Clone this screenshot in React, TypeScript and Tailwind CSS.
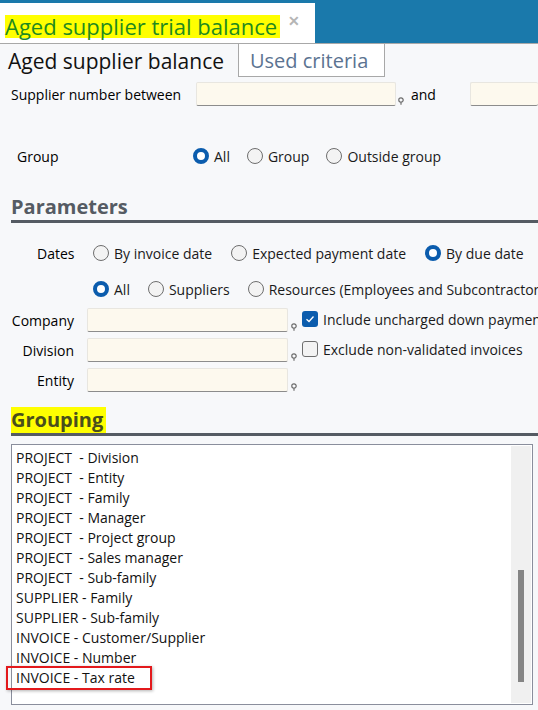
import React from 'react';

const font = "font-['Open_Sans',sans-serif]";

function Pin() {
  return (
    <svg width="6" height="8" viewBox="0 0 6 8" className="shrink-0">
      <circle cx="3" cy="3" r="2.2" fill="none" stroke="#6b6b6b" strokeWidth="1.2" />
      <path d="M3 5.2 L3 7.8" stroke="#6b6b6b" strokeWidth="1.2" />
    </svg>
  );
}

function Field({ className }: { className: string }) {
  return (
    <div
      className={`h-[24px] shrink-0 bg-[#fdf9ee] border border-[#e8e6e0] border-b-[#8c8c8c] rounded-[2px] ${className}`}
    />
  );
}

function Radio({ checked, label }: { checked?: boolean; label: string }) {
  return (
    <div className="flex items-center gap-[5px] shrink-0">
      {checked ? (
        <span className="w-[16px] h-[16px] rounded-full border-[4.5px] border-[#0b5cad] bg-white" />
      ) : (
        <span className="w-[16px] h-[16px] rounded-full border border-[#6e6e6e] bg-[#f3f3f3]" />
      )}
      <span className="text-[14px] text-[#1a1a1a] whitespace-nowrap">{label}</span>
    </div>
  );
}

function Check({ checked, label }: { checked?: boolean; label: string }) {
  return (
    <div className="flex items-center gap-[5px] whitespace-nowrap">
      {checked ? (
        <span className="w-[16px] h-[16px] shrink-0 rounded-[3px] bg-[#0b5cad] flex items-center justify-center">
          <svg width="10" height="8" viewBox="0 0 10 8">
            <path d="M1.5 4.2 L4 6.5 L8.5 1.5" fill="none" stroke="white" strokeWidth="1.3" />
          </svg>
        </span>
      ) : (
        <span className="w-[16px] h-[16px] shrink-0 rounded-[3px] border border-[#6e6e6e] bg-[#f3f3f3]" />
      )}
      <span className="text-[14px] text-[#1a1a1a]">{label}</span>
    </div>
  );
}

const items = [
  'PROJECT  - Division',
  'PROJECT  - Entity',
  'PROJECT  - Family',
  'PROJECT  - Manager',
  'PROJECT  - Project group',
  'PROJECT  - Sales manager',
  'PROJECT  - Sub-family',
  'SUPPLIER - Family',
  'SUPPLIER - Sub-family',
  'INVOICE - Customer/Supplier',
  'INVOICE - Number',
  'INVOICE - Tax rate',
];

export default function App() {
  return (
    <div className={`w-[538px] h-[710px] overflow-hidden bg-[#f7f8fa] ${font}`}>
      {/* Window tab bar */}
      <div className="h-[43px] bg-[#1a79ab] pt-[3px]">
        <div className="w-[315px] h-[40px] bg-white flex items-center pl-[5px] pt-[6px]">
          <span className="bg-[#ffff00] text-[#1f8a1f] text-[22px] leading-[23px] pr-[3px] whitespace-nowrap">
            Aged supplier trial balance
          </span>
          <span className="ml-[8px] text-[#b5b5b5] text-[14px] font-bold -mt-[12px]">✕</span>
        </div>
      </div>
      <div className="h-px bg-[#a8a8a8]" />

      {/* Sub tabs */}
      <div className="flex h-[33px]">
        <div className="w-[238px] pl-[8px] text-[21px] leading-[34px] text-[#111] whitespace-nowrap">
          Aged supplier balance
        </div>
        <div className="w-[147px] border-x border-b border-[#a8a8a8] bg-white pl-[11px] text-[20px] leading-[33px] text-[#5b7391]">
          Used criteria
        </div>
      </div>

      {/* Supplier number */}
      <div className="flex items-end mt-[5px] h-[24px]">
        <span className="w-[196px] shrink-0 pl-[11px] text-[14px] self-center whitespace-nowrap">
          Supplier number between
        </span>
        <Field className="w-[200px]" />
        <span className="ml-[2px] mb-[1px]"><Pin /></span>
        <span className="ml-[7px] text-[14px] self-center">and</span>
        <Field className="ml-[34px] flex-1 border-r-0" />
      </div>

      {/* Group */}
      <div className="flex items-center mt-[40px] h-[20px]">
        <span className="w-[193px] pl-[17px] text-[14px]">Group</span>
        <div className="flex gap-[17px]">
          <Radio checked label="All" />
          <Radio label="Group" />
          <Radio label="Outside group" />
        </div>
      </div>

      {/* Parameters */}
      <div className="ml-[11px] mt-[29px] border-b-[3px] border-[#555b63]">
        <span className="text-[20px] font-bold text-[#555b63] leading-[24px]">Parameters</span>
      </div>

      <div className="flex items-center mt-[20px] h-[20px]">
        <span className="w-[93px] pl-[37px] text-[14px]">Dates</span>
        <div className="flex gap-[19px]">
          <Radio label="By invoice date" />
          <Radio label="Expected payment date" />
          <Radio checked label="By due date" />
        </div>
      </div>

      <div className="flex items-center mt-[16px] h-[20px] overflow-hidden">
        <div className="pl-[93px] flex gap-[18px]">
          <Radio checked label="All" />
          <Radio label="Suppliers" />
          <Radio label="Resources (Employees and Subcontractors)" />
        </div>
      </div>

      {/* Company / Division / Entity */}
      <div className="mt-[9px] flex flex-col gap-[6px]">
        {[
          { l: 'Company', c: <Check checked label="Include uncharged down payments" /> },
          { l: 'Division', c: <Check label="Exclude non-validated invoices" /> },
          { l: 'Entity', c: null },
        ].map((r) => (
          <div key={r.l} className="flex items-center h-[24px] overflow-hidden">
            <span className="w-[74px] shrink-0 text-right text-[14px]">{r.l}</span>
            <Field className="ml-[13px] w-[201px]" />
            <span className="ml-[3px] self-end mb-[1px]"><Pin /></span>
            <div className="ml-[5px] -mt-[2px] shrink-0">{r.c}</div>
          </div>
        ))}
      </div>

      {/* Grouping */}
      <div className="ml-[11px] mt-[15px] border-b-[3px] border-[#555b63] flex">
        <span className="bg-[#ffff00] text-[20px] font-bold text-[#4a4f1c] leading-[26px] pr-[3px]">Grouping</span>
      </div>

      <div className="mx-[11px] mt-[8px] w-[522px] h-[261px] border border-[#8a8e9c] bg-white flex">
        <div className="flex-1 pt-[3px] pl-[4px]">
          {items.map((it) => (
            <div key={it} className="h-[20px] leading-[20px] text-[14px] text-[#111] whitespace-pre">
              {it === 'INVOICE - Tax rate' ? (
                <span className="relative inline-block">
                  {it}
                  <span className="absolute -left-[10px] -top-[2px] w-[146px] h-[24px] border-2 border-[#e3191c] shadow-[1px_1px_3px_rgba(0,0,0,0.3)]" />
                </span>
              ) : (
                it
              )}
            </div>
          ))}
        </div>
        <div className="w-[20px] bg-[#f0f0f0] my-px mr-px relative">
          <div className="absolute left-[7px] top-[124px] w-[6px] h-[112px] bg-[#858585]" />
        </div>
      </div>
    </div>
  );
}
